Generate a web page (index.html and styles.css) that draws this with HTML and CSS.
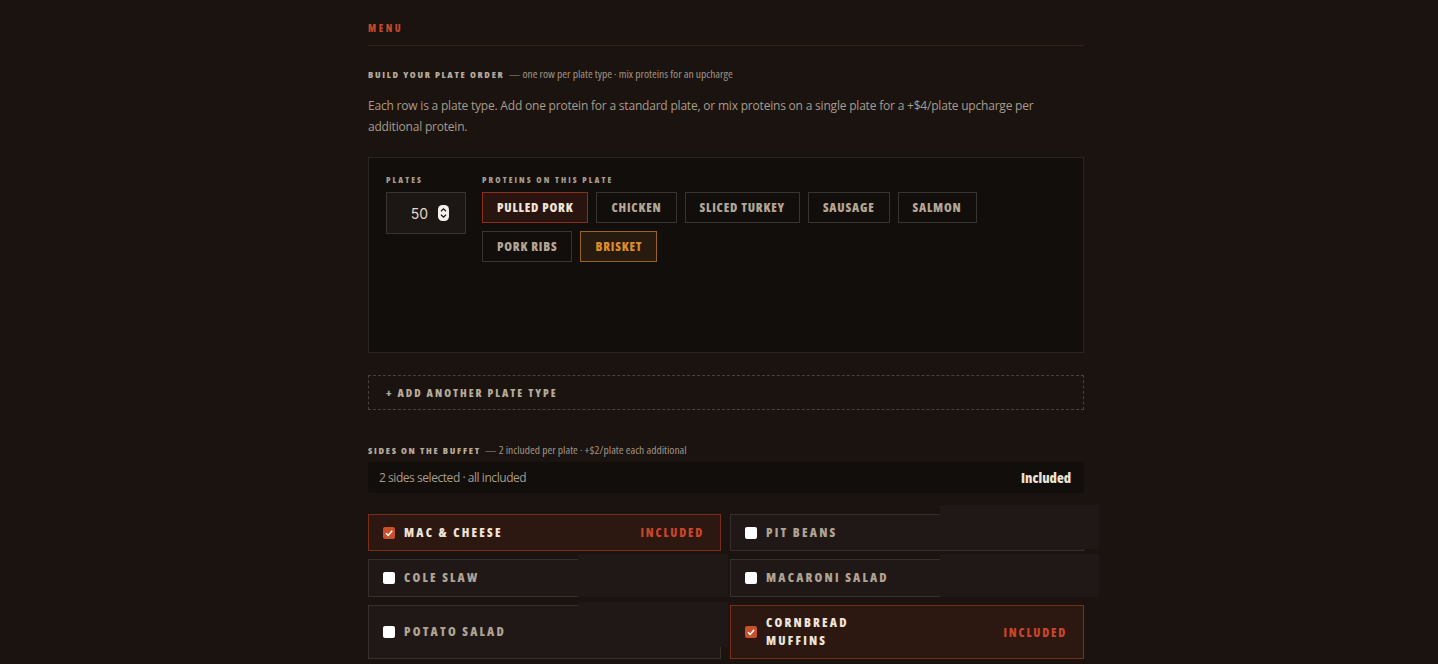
FILE: index.html
```html
<!DOCTYPE html>
<html>
<head>
<meta charset="utf-8">
<link rel="stylesheet" href="styles.css">
</head>
<body>
<main class="wrap">
  <div class="eyebrow">MENU</div>

  <h2 class="section-title">BUILD YOUR PLATE ORDER <span class="sub">— one row per plate type · mix proteins for an upcharge</span></h2>
  <p class="lead">Each row is a plate type. Add one protein for a standard plate, or mix proteins on a single plate for a +$4/plate upcharge per additional protein.</p>

  <div class="plate-card">
    <div class="plates-col">
      <div class="mini-label">PLATES</div>
      <div class="stepper">
        <span class="num">50</span>
        <svg class="spin" width="11" height="16" viewBox="0 0 11 16"><rect x="0" y="0" width="11" height="16" rx="4.5" fill="#f4f0ea"/><path d="M3 6.3 L5.5 3.8 L8 6.3" fill="none" stroke="#1c1714" stroke-width="1.3"/><path d="M3 9.7 L5.5 12.2 L8 9.7" fill="none" stroke="#1c1714" stroke-width="1.3"/></svg>
      </div>
    </div>
    <div class="proteins-col">
      <div class="mini-label">PROTEINS ON THIS PLATE</div>
      <div class="chips">
        <span class="chip chip-on">PULLED PORK</span>
        <span class="chip">CHICKEN</span>
        <span class="chip">SLICED TURKEY</span>
        <span class="chip">SAUSAGE</span>
        <span class="chip">SALMON</span>
        <span class="chip">PORK RIBS</span>
        <span class="chip chip-gold">BRISKET</span>
      </div>
    </div>
  </div>

  <div class="add-btn">+ ADD ANOTHER PLATE TYPE</div>

  <h2 class="section-title sides-title">SIDES ON THE BUFFET <span class="sub">— 2 included per plate · +$2/plate each additional</span></h2>
  <div class="summary">
    <span>2 sides selected · all included</span>
    <span class="summary-val">Included</span>
  </div>

  <div class="sides">
    <div class="side side-on"><span class="box box-on"><svg width="12" height="12" viewBox="0 0 12 12"><path d="M3 6.2 L5.2 8.4 L9.2 3.8" fill="none" stroke="#fff" stroke-width="1.6"/></svg></span><span class="side-name">MAC &amp; CHEESE</span><span class="incl">INCLUDED</span></div>
    <div class="side"><span class="box"></span><span class="side-name">PIT BEANS</span></div>
    <div class="side"><span class="box"></span><span class="side-name">COLE SLAW</span></div>
    <div class="side"><span class="box"></span><span class="side-name">MACARONI SALAD</span></div>
    <div class="side"><span class="box"></span><span class="side-name">POTATO SALAD</span></div>
    <div class="side side-on"><span class="box box-on"><svg width="12" height="12" viewBox="0 0 12 12"><path d="M3 6.2 L5.2 8.4 L9.2 3.8" fill="none" stroke="#fff" stroke-width="1.6"/></svg></span><span class="side-name">CORNBREAD<br>MUFFINS</span><span class="incl">INCLUDED</span></div>
  </div>

  <div class="ghost g1"></div>
  <div class="ghost g2"></div>
  <div class="ghost g3"></div>
  <div class="ghost g4"></div>
</main>
</body>
</html>
```
FILE: styles.css
```css
* { box-sizing: border-box; }
html, body { margin: 0; padding: 0; }
body {
  background: #1a1310;
  color: #a89c8c;
  font-family: "Open Sans", "Noto Sans", sans-serif;
  font-stretch: 100%;
  height: 664px;
  overflow: hidden;
  padding-left: 14px;
}
.wrap {
  width: 716px;
  margin: 0 auto;
  padding-top: 22px;
  position: relative;
}
.eyebrow {
  font-weight: 800;
  font-stretch: 75%;
  font-size: 10px;
  line-height: 12px;
  letter-spacing: 2.6px;
  color: #c8462a;
  padding-bottom: 11px;
  border-bottom: 1px solid #3a1e17;
}
.section-title {
  margin: 22px 0 0;
  font-size: 9.5px;
  line-height: 12px;
  font-weight: 800;
  font-stretch: 75%;
  letter-spacing: 1.7px;
  color: #b8ab9a;
}
.section-title .sub {
  font-weight: normal;
  letter-spacing: 0;
  font-size: 11.5px;
  font-stretch: 75%;
  color: #a09483;
  margin-left: 1px;
}
.lead {
  margin: 14px 0 0;
  font-size: 12px;
  letter-spacing: -0.2px;
  line-height: 21px;
  color: #a89c8c;
}
.plate-card {
  margin-top: 20px;
  height: 196px;
  background: #120e0b;
  border: 1px solid #2a2420;
  padding: 17px 17px;
  display: flex;
  gap: 16px;
}
.mini-label {
  font-size: 8.5px;
  line-height: 10px;
  font-weight: 800;
  font-stretch: 75%;
  letter-spacing: 2.1px;
  color: #a89c8c;
  margin-bottom: 7px;
}
.plates-col { width: 80px; }
.stepper {
  width: 80px;
  height: 42px;
  background: #1c1714;
  border: 1px solid #3a332e;
  display: flex;
  align-items: center;
  justify-content: flex-end;
  padding-right: 16px;
  gap: 10px;
}
.stepper .num {
  font-family: "Inter", "Roboto", sans-serif;
  font-stretch: normal;
  font-size: 14px;
  color: #e2d8ca;
}
.proteins-col { flex: 1; }
.chips {
  display: flex;
  flex-wrap: wrap;
  gap: 8px 8px;
  width: 500px;
}
.chip {
  height: 31px;
  display: inline-flex;
  align-items: center;
  padding: 0 14px;
  border: 1px solid #3a332e;
  font-size: 12.5px;
  font-weight: 800;
  font-stretch: 75%;
  letter-spacing: 0.8px;
  color: #b3a696;
}
.chip-on {
  background: #2a140f;
  border-color: #8a2e1e;
  color: #efe5d8;
}
.chip-gold {
  background: #271a0e;
  border-color: #9a6420;
  color: #dc8c28;
}
.add-btn {
  margin-top: 22px;
  height: 35px;
  border: 1px dashed #4a403a;
  display: flex;
  align-items: center;
  padding-left: 17px;
  font-size: 11px;
  font-weight: 800;
  font-stretch: 75%;
  letter-spacing: 2px;
  color: #b8ab9a;
}
.sides-title { margin-top: 34px; }
.summary {
  margin-top: 5px;
  height: 31px;
  background: #120e0b;
  border-radius: 3px;
  display: flex;
  align-items: center;
  justify-content: space-between;
  padding: 0 13px 0 11px;
  font-size: 12px;
  letter-spacing: -0.45px;
  color: #a89c8c;
}
.summary-val {
  font-size: 14px;
  font-weight: 800;
  font-stretch: 75%;
  letter-spacing: 0;
  color: #ece2d4;
}
.sides {
  margin-top: 21px;
  display: grid;
  grid-template-columns: 353px 354px;
  column-gap: 9px;
  row-gap: 8px;
}
.side {
  min-height: 37px;
  background: #201816;
  border: 1px solid #3a2e2a;
  display: flex;
  align-items: center;
  padding: 0 16px 0 14px;
  font-size: 12.5px;
  font-weight: 800;
  font-stretch: 75%;
  letter-spacing: 2.2px;
  color: #b0a393;
}
.sides .side:nth-child(3), .sides .side:nth-child(4) { min-height: 38px; }
.sides .side:nth-child(5), .sides .side:nth-child(6) { min-height: 54px; }
.side-name { line-height: 18px; flex: 1; }
.side-on {
  background: #2d1711;
  border-color: #7a2e1a;
  color: #efe4d6;
}
.box {
  width: 12px;
  height: 12px;
  border-radius: 2px;
  background: #ffffff;
  margin-right: 9px;
  flex: none;
  display: inline-flex;
}
.box-on { background: #c8502a; }
.incl {
  color: #c8462a;
  font-size: 12px;
  letter-spacing: 1.8px;
}
.ghost {
  position: absolute;
  background: #1f1816;
}
.g1 { left: 210px; top: 554px; width: 150px; height: 43px; }
.g2 { left: 210px; top: 602px; width: 150px; height: 45px; }
.g3 { left: 572px; top: 505px; width: 159px; height: 44px; }
.g4 { left: 572px; top: 554px; width: 159px; height: 43px; }
```
